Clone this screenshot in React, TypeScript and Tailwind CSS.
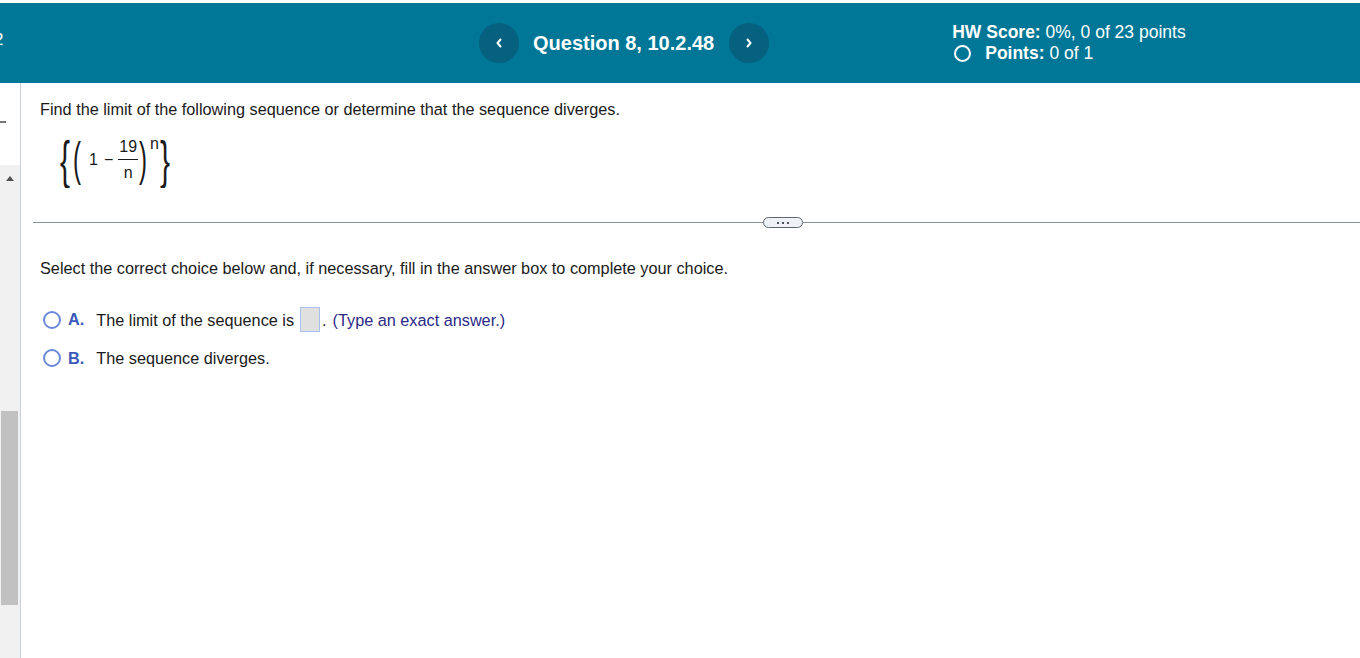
import React from 'react';

// Header navigation chevron button
const NavButton: React.FC<{ dir: 'left' | 'right' }> = ({ dir }) => (
  <div className="flex h-[40px] w-[40px] items-center justify-center rounded-full bg-[#05617f]">
    <svg width="10" height="12" viewBox="0 0 10 12" fill="none" stroke="#ffffff" strokeWidth="2" strokeLinecap="round" strokeLinejoin="round">
      {dir === 'left' ? <path d="M6.5 2.5 L3.5 6 L6.5 9.5" /> : <path d="M3.5 2.5 L6.5 6 L3.5 9.5" />}
    </svg>
  </div>
);

const Radio: React.FC = () => (
  <span className="inline-block h-[18px] w-[18px] shrink-0 rounded-full border-2 border-[#6a89da] bg-white" />
);

const Sequence: React.FC = () => (
  <div className="flex h-[56px] items-center text-[#1a1a1a]">
    <span className="inline-block scale-y-[1.75] text-[30px] font-light leading-none">{'{'}</span>
    <span className="ml-[3px] inline-block scale-y-[1.9] text-[24px] font-light leading-none">(</span>
    <span className="ml-[8px] text-[16px]">1</span>
    <span className="ml-[6px] text-[16px]">−</span>
    <span className="ml-[5px] flex flex-col items-center text-[16px] leading-[14px]">
      <span className="px-[1px] pb-[5px]">19</span>
      <span className="h-[1px] w-full bg-[#1a1a1a]" />
      <span className="pt-[6px]">n</span>
    </span>
    <span className="ml-[1px] inline-block scale-y-[1.9] text-[24px] font-light leading-none">)</span>
    <span className="ml-[3px] -mt-[32px] text-[16px]">n</span>
    <span className="ml-[1px] inline-block scale-y-[1.75] text-[30px] font-light leading-none">{'}'}</span>
  </div>
);

export default function App() {
  return (
    <div className="min-h-[658px] w-[1360px] overflow-hidden bg-white" style={{ fontFamily: '"Liberation Sans", Arial, sans-serif' }}>
      {/* Top bar */}
      <div className="mt-[3px] flex h-[80px] items-center bg-[#007797] text-white">
        <div className="w-[6px] self-start pt-[28px] text-[17px] leading-none">
          <span className="-ml-[6px]">2</span>
        </div>
        <div className="ml-[473px] flex items-center">
          <NavButton dir="left" />
          <span className="ml-[14px] text-[20px] font-bold">Question 8, 10.2.48</span>
          <span className="ml-[15px]"><NavButton dir="right" /></span>
        </div>
        <div className="ml-[183px] flex flex-col text-[17.5px] leading-[21px]">
          <div>
            <span className="font-bold">HW Score:</span> 0%, 0 of 23 points
          </div>
          <div className="flex items-center">
            <span className="ml-[2px] inline-block h-[17px] w-[17px] rounded-full border-2 border-white" />
            <span className="ml-[14px] font-bold">Points:</span>
            <span className="ml-[5px]">0 of 1</span>
          </div>
        </div>
      </div>

      <div className="flex min-h-[575px]">
        {/* Left strip with scrollbar */}
        <div className="flex w-[21px] shrink-0 flex-col border-r border-[#c8cfe0]">
          <div className="flex h-[82px] items-center">
            <span className="mt-[-4px] h-[2px] w-[6px] bg-[#777]" />
          </div>
          <div className="flex flex-1 flex-col bg-[#f1f1f1]">
            <div className="flex h-[26px] items-center justify-center">
              <span className="h-0 w-0 border-x-[4px] border-b-[5px] border-x-transparent border-b-[#505050]" />
            </div>
            <div className="mt-[220px] ml-[1px] h-[194px] w-[17px] bg-[#c1c1c1]" />
          </div>
        </div>

        {/* Main content */}
        <div className="flex-1">
          <div className="pl-[19px] pt-[14px] text-[16.25px] leading-[24px] text-[#1a1a1a]">
            Find the limit of the following sequence or determine that the sequence diverges.
          </div>
          <div className="ml-[39px] mt-[11px]">
            <Sequence />
          </div>

          {/* Divider */}
          <div className="ml-[12px] mt-[29px] flex items-center">
            <div className="h-[1px] w-[730px] bg-[#8a9099]" />
            <div className="flex h-[11px] w-[40px] items-center justify-center gap-[3px] rounded-full border border-[#5d6673] bg-[#eef1f5]">
              <span className="h-[2px] w-[2px] bg-[#4a5562]" />
              <span className="h-[2px] w-[2px] bg-[#4a5562]" />
              <span className="h-[2px] w-[2px] bg-[#4a5562]" />
            </div>
            <div className="h-[1px] flex-1 bg-[#8a9099]" />
          </div>

          <div className="pl-[19px] pt-[28px] text-[16.25px] leading-[24px] text-[#1a1a1a]">
            Select the correct choice below and, if necessary, fill in the answer box to complete your choice.
          </div>

          <div className="mt-[27px] flex h-[25px] items-center pl-[22px] text-[16.25px] leading-[24px]">
            <Radio />
            <span className="ml-[7px] self-start font-bold text-[#3a59b8]">A.</span>
            <span className="ml-[12px] text-[#1a1a1a]">The limit of the sequence is</span>
            <span className="ml-[6px] inline-block h-[25px] w-[20px] border border-[#a9c0ea] bg-[#e0e0e0]" />
            <span className="ml-[2px] text-[#1a1a1a]">.</span>
            <span className="ml-[6px] text-[#2b2a86]">(Type an exact answer.)</span>
          </div>

          <div className="mt-[14px] flex h-[24px] items-center pl-[22px] text-[16.25px] leading-[24px]">
            <Radio />
            <span className="ml-[7px] font-bold text-[#3a59b8]">B.</span>
            <span className="ml-[12px] text-[#1a1a1a]">The sequence diverges.</span>
          </div>
        </div>
      </div>
    </div>
  );
}
